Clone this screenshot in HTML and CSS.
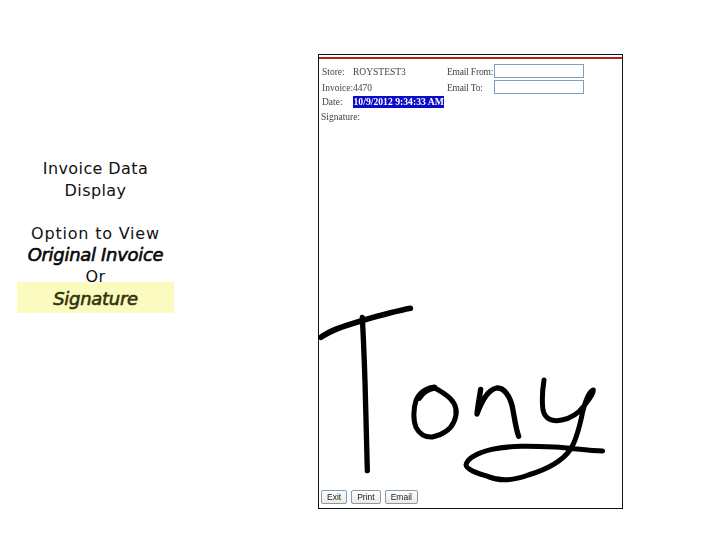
FILE: index.html
```html
<!DOCTYPE html>
<html lang="en">
<head>
<meta charset="utf-8">
<title>Invoice Data Display</title>
<link rel="stylesheet" href="styles.css">
</head>
<body>
<main class="slide">
  <section class="caption">
    <p class="line">Invoice Data</p>
    <p class="line">Display</p>
    <p class="line spacer">&nbsp;</p>
    <p class="line wide">Option to View</p>
    <p class="line em">Original Invoice</p>
    <p class="line">Or</p>
    <p class="line em highlight">Signature</p>
  </section>
  <section class="shot">
    <div class="redline"></div>
    <div class="fields">
      <div class="meta">
        <div class="row"><span class="label">Store:</span><span>ROYSTEST3</span></div>
        <div class="row"><span class="label">Invoice:</span><span>4470</span></div>
        <div class="row date"><span class="label">Date:</span><span class="selected">10/9/2012 9:34:33 AM</span></div>
        <div class="row sig">Signature:</div>
      </div>
      <div class="email">
        <div class="row"><span class="elabel">Email From:</span><span class="input"></span></div>
        <div class="row"><span class="elabel">Email To:</span><span class="input"></span></div>
      </div>
    </div>
    <svg class="signature" viewBox="0 0 930 645" aria-hidden="true">
      <g fill="none" stroke="#000" stroke-linecap="round" stroke-linejoin="round">
        <path stroke-width="17" d="M18 112C45 92 80 80 140 62C190 48 240 34 286 25"/>
        <path stroke-width="16" d="M142 52C146 130 150 230 152 320C154 400 156 460 157 512"/>
        <path stroke-width="15" d="M358 263C335 262 312 278 303 302C295 325 294 360 303 382C315 405 335 412 352 411C378 405 405 392 417 365C428 340 425 315 405 295C390 280 375 272 358 263"/>
        <path stroke-width="19" d="M312 293C322 278 338 266 358 263"/>
        <path stroke-width="16" d="M497 268C493 295 488 320 486 342C498 310 515 270 545 264C568 262 585 290 592 320C598 350 602 385 611 409"/>
        <path stroke-width="15" d="M687 240C683 265 680 300 684 330C690 358 712 366 740 360C770 354 790 340 805 320C820 300 835 285 835 270C825 272 812 300 803 335C795 375 785 420 765 450C740 485 690 510 640 525C600 540 555 545 520 530C490 520 455 510 453 495C456 475 490 458 530 448C590 436 650 438 720 441C770 444 820 452 863 453"/>
      </g>
    </svg>
    <div class="buttons">
      <span class="btn">Exit</span>
      <span class="btn">Print</span>
      <span class="btn">Email</span>
    </div>
  </section>
</main>
</body>
</html>
```

FILE: styles.css
```css
html, body {
  margin: 0;
  padding: 0;
  background: #fff;
}

.slide {
  width: 720px;
  height: 540px;
  display: flex;
  align-items: flex-start;
  overflow: hidden;
}

.caption {
  width: 157px;
  margin: 158px 0 0 17px;
  font-family: "DejaVu Sans", Verdana, sans-serif;
  font-size: 16px;
  letter-spacing: 0.4px;
  color: #111;
  text-align: center;
}

.line {
  margin: 0;
  height: 21.6px;
  line-height: 21.6px;
  white-space: nowrap;
}

.wide {
  letter-spacing: 0.8px;
}

.em {
  font-style: italic;
  font-size: 18px;
  letter-spacing: -0.3px;
  -webkit-text-stroke: 0.6px #000;
}

.highlight {
  height: 31px;
  line-height: 33px;
  margin-top: -6px;
  background: #fbfbc0;
  color: #33330a;
  -webkit-text-stroke: 0.6px #33330a;
}

.shot {
  position: relative;
  box-sizing: border-box;
  width: 305px;
  height: 455px;
  margin: 54px 0 0 144px;
  border: 1px solid #111;
  background: #fff;
  font-family: "Liberation Serif", "Times New Roman", serif;
  font-size: 9.5px;
  color: #444;
}

.redline {
  height: 2px;
  margin-top: 2px;
  background: #b3201c;
}

.fields {
  display: flex;
  padding: 5px 0 0 3px;
  filter: blur(0.4px);
}

.meta {
  width: 125px;
}

.row {
  display: flex;
  align-items: center;
  height: 16px;
  white-space: nowrap;
}

.label {
  width: 31px;
}

.date {
  height: 12px;
}

.selected {
  background: #0a0ac8;
  color: #fff;
  font-weight: 700;
  font-size: 9.7px;
  padding: 0 0.5px;
  height: 12px;
  line-height: 12px;
}

.sig {
  margin-left: -1px;
  height: 18px;
}

.elabel {
  width: 47px;
  letter-spacing: -0.2px;
}

.input {
  box-sizing: border-box;
  width: 90px;
  height: 14px;
  margin-bottom: 3px;
  border: 1px solid #7f9db9;
  background: #fff;
}

.signature {
  position: absolute;
  left: -4px;
  top: 245px;
  width: 310px;
  height: 215px;
}

.buttons {
  position: absolute;
  left: 2px;
  bottom: 4px;
  display: flex;
  gap: 4px;
  filter: blur(0.4px);
}

.btn {
  box-sizing: border-box;
  height: 14px;
  line-height: 12px;
  padding: 0 5px;
  border: 1px solid #7f9db9;
  border-radius: 2px;
  background: linear-gradient(#fff, #ece9e0);
  font-family: "Liberation Sans", Arial, sans-serif;
  font-size: 8.5px;
  color: #222;
}
```
